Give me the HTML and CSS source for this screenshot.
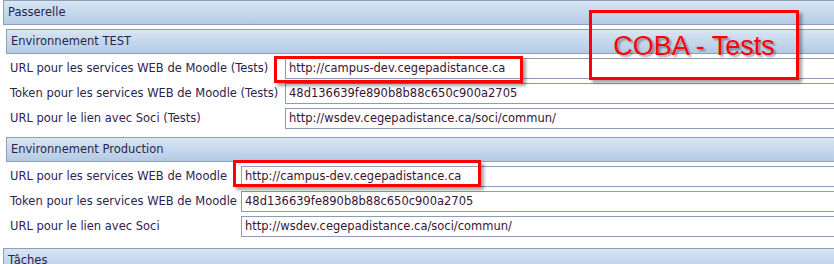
FILE: index.html
```html
<!DOCTYPE html>
<html lang="fr">
<head>
<meta charset="utf-8">
<title>Passerelle</title>
<link rel="stylesheet" href="styles.css">
</head>
<body>
<div class="page">
  <section class="group">
    <div class="hdr">Passerelle</div>
    <div class="sub">
      <div class="hdr">Environnement TEST</div>
      <div class="rows rows-test">
        <label class="lbl">URL pour les services WEB de Moodle (Tests)</label>
        <div class="field">http://campus-dev.cegepadistance.ca</div>
        <label class="lbl">Token pour les services WEB de Moodle (Tests)</label>
        <div class="field">48d136639fe890b8b88c650c900a2705</div>
        <label class="lbl">URL pour le lien avec Soci (Tests)</label>
        <div class="field">http://wsdev.cegepadistance.ca/soci/commun/</div>
      </div>
    </div>
    <div class="sub">
      <div class="hdr">Environnement Production</div>
      <div class="rows rows-prod">
        <label class="lbl">URL pour les services WEB de Moodle</label>
        <div class="field">http://campus-dev.cegepadistance.ca</div>
        <label class="lbl">Token pour les services WEB de Moodle</label>
        <div class="field">48d136639fe890b8b88c650c900a2705</div>
        <label class="lbl">URL pour le lien avec Soci</label>
        <div class="field">http://wsdev.cegepadistance.ca/soci/commun/</div>
      </div>
    </div>
  </section>
  <section class="group group-next">
    <div class="hdr">Tâches</div>
  </section>

  <div class="mark mark-test"></div>
  <div class="mark mark-prod"></div>
  <div class="mark mark-coba"><span class="coba-text">COBA - Tests</span></div>
</div>
</body>
</html>
```

FILE: styles.css
```css
html, body {
  margin: 0;
  padding: 0;
  background: #ffffff;
  overflow: hidden;
}

.page {
  position: relative;
  width: 900px;
  padding-left: 3px;
  font-family: "DejaVu Sans", Verdana, sans-serif;
  font-size: 11.5px;
  color: #2c2450;
}

.hdr {
  height: 23px;
  line-height: 23px;
  box-sizing: content-box;
  border: 1px solid #8e9fba;
  border-right: none;
  background: linear-gradient(to bottom, #d8e5f3 0%, #c6d8ec 50%, #b4cae4 100%);
  padding-left: 4px;
  color: #2a1f4e;
}

.sub {
  margin-left: 3px;
  margin-top: 4px;
}

.sub + .sub {
  margin-top: 8px;
}

.rows {
  display: grid;
  row-gap: 4px;
  margin-top: 4px;
}

.rows-test {
  grid-template-columns: 279px 1fr;
}

.rows-prod {
  grid-template-columns: 235px 1fr;
}

.lbl {
  padding-left: 4px;
  height: 21px;
  line-height: 21px;
  white-space: nowrap;
  color: #2c2450;
}

.field {
  height: 19px;
  line-height: 19px;
  border: 1px solid #8c9cb6;
  border-right: none;
  padding-left: 3px;
  background: #fff;
  color: #3a1433;
  white-space: nowrap;
}

.group-next {
  margin-top: 11px;
}

.mark {
  position: absolute;
  border: 3px solid #ff0000;
  box-shadow: 3px 3px 3px rgba(0, 0, 0, 0.35);
  box-sizing: border-box;
}

.mark-test {
  left: 274px;
  top: 56px;
  width: 249px;
  height: 27px;
}

.mark-prod {
  left: 233px;
  top: 160px;
  width: 248px;
  height: 27px;
}

.mark-coba {
  left: 589px;
  top: 10px;
  width: 210px;
  height: 70px;
  text-align: center;
}

.coba-text {
  display: block;
  margin-top: 17px;
  font-family: "Liberation Sans", Arial, sans-serif;
  font-size: 27px;
  line-height: 32px;
  color: #ff0000;
  text-shadow: 2px 2px 2px rgba(0, 0, 0, 0.35);
}
```
